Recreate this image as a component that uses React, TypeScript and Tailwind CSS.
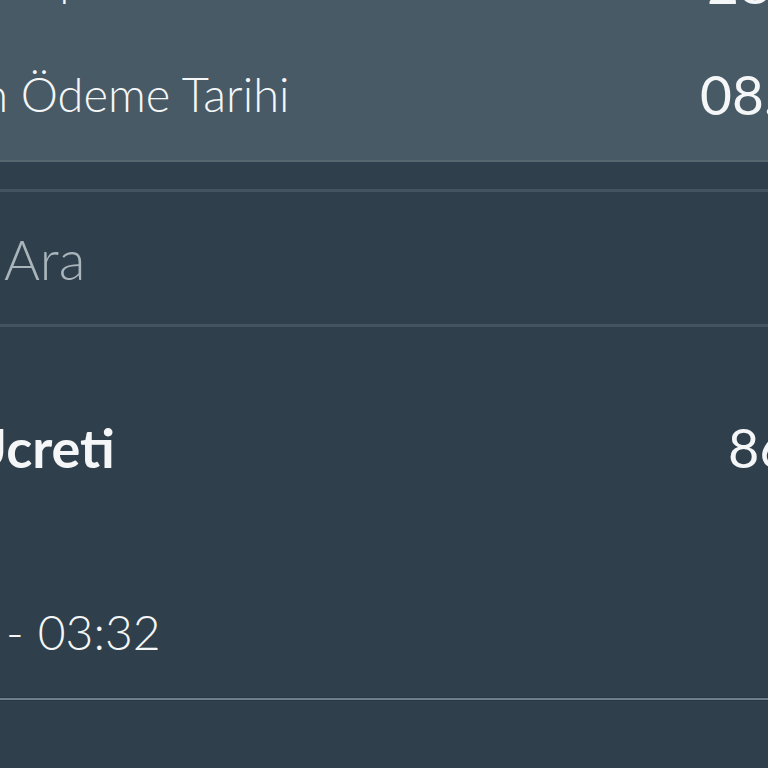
export default function App() {
  return (
    <div
      className="w-[768px] h-[768px] overflow-hidden bg-[#2f3f4b] flex flex-col text-[#f4f6f7]"
      style={{ fontFamily: "Lato, 'Open Sans', sans-serif" }}
    >
      {/* üst özet paneli */}
      <div className="bg-[#485a65] -mt-[72px] pb-[10px] border-b-2 border-[#56676f] shrink-0">
        <div className="h-[111px] flex items-center">
          <div className="flex-1 -ml-[45px] -mt-[12px] text-[48px] font-light whitespace-nowrap">
            Hesap Kesim Tarihi
          </div>
          <div className="w-[61px] shrink-0 text-[55px] whitespace-nowrap">28.04.2024</div>
        </div>
        <div className="h-[111px] flex items-center">
          <div className="flex-1 -ml-[69px] text-[47px] font-light whitespace-nowrap">
            Son Ödeme Tarihi
          </div>
          <div className="w-[68px] shrink-0 text-[55px] whitespace-nowrap">08.05.2024</div>
        </div>
      </div>

      <div className="h-[27px] shrink-0" />
      <div className="h-[3px] bg-[#435360] shrink-0" />

      {/* arama */}
      <div className="h-[132px] flex items-center shrink-0">
        <div className="pl-[4px] pt-[2px] text-[55px] font-light text-[#a9b4bb]">Ara</div>
      </div>
      <div className="h-[3px] bg-[#44545f] shrink-0" />

      {/* hareket satırı */}
      <div className="pt-[90px] pb-[40px] flex flex-col shrink-0">
        <div className="h-[60px] flex items-center">
          <div className="flex-1 -ml-[33px] text-[54px] font-bold whitespace-nowrap">Ücreti</div>
          <div className="w-[40px] shrink-0 text-[54px] whitespace-nowrap">86,90 TL</div>
        </div>
        <div className="h-[130px]" />
        <div className="h-[50px] flex items-center">
          <div className="ml-[6px] text-[48px] font-light whitespace-nowrap flex items-center">
            <span className="mr-[14px]">-</span>
            <span>03:32</span>
          </div>
        </div>
      </div>
      <div className="h-[4px] bg-[#6e7f8b] border-y border-[#2a3843] shrink-0" />
      <div className="flex-1" />
    </div>
  );
}
